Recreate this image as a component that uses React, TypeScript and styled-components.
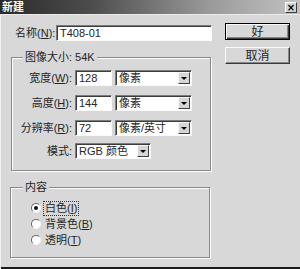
import { Fragment } from 'react';
import styled, { createGlobalStyle } from 'styled-components';

const GlobalStyle = createGlobalStyle`
  html, body {
    margin: 0;
    padding: 0;
    background: #d8d8d8;
  }
  body {
    font-family: "Liberation Sans", "Noto Sans CJK SC", sans-serif;
    font-size: 11px;
    color: #262626;
  }
`;

const Window = styled.div`
  width: 300px;
  height: 269px;
  box-sizing: border-box;
  display: flex;
  flex-direction: column;
  background: #d8d8d8;
  box-shadow: inset 1px 0 0 #f0f0f0, inset 0 -2px 0 #1a1a1a;
  overflow: hidden;
`;

const TitleBar = styled.div`
  flex: none;
  height: 14px;
  display: flex;
  align-items: center;
  justify-content: space-between;
  padding: 0 3px 0 2px;
  background: linear-gradient(to right, #2a2a2a 0%, #4c4c4c 30%, #9a9a9a 70%, #c2c2c2 100%);
  border-bottom: 1px solid #ececec;
`;

const Title = styled.span`
  color: #fff;
  font-weight: bold;
  font-size: 11px;
  line-height: 14px;
`;

const CloseButton = styled.span`
  width: 10px;
  height: 9px;
  display: flex;
  align-items: center;
  justify-content: center;
  background: #d4d4d4;
  border: 1px solid;
  border-color: #fff #3a3a3a #3a3a3a #fff;
  font: bold 10px "DejaVu Sans", sans-serif;
  line-height: 9px;
  color: #000;
`;

const Body = styled.div`
  flex: 1;
  display: flex;
  gap: 13px;
  padding: 8px 0 0 10px;
`;

const FormColumn = styled.div`
  width: 202px;
  display: flex;
  flex-direction: column;
`;

const NameRow = styled.div`
  display: flex;
  align-items: center;
  margin-top: 2px;
  height: 16px;
`;

const NameLabel = styled.span`
  width: 41px;
  padding-left: 5px;
  line-height: 14px;
  white-space: nowrap;
`;

const Field = styled.div<{ $width?: number }>`
  box-sizing: border-box;
  width: ${(p) => (p.$width ? `${p.$width}px` : '100%')};
  height: 16px;
  display: flex;
  align-items: center;
  padding-left: 3px;
  background: #fff;
  border: 1px solid;
  border-color: #7c7c7c #fafafa #fafafa #7c7c7c;
  box-shadow: inset 1px 1px 0 #3c3c3c;
  line-height: 14px;
  white-space: nowrap;
`;

const Group = styled.fieldset<{ $shift: number }>`
  box-sizing: border-box;
  width: 200px;
  margin: 9px 0 0 ${(p) => p.$shift}px;
  padding: 6px 0 9px 0;
  border: 1px solid #8a8a8a;
  box-shadow: inset 1px 1px 0 #fbfbfb, 1px 1px 0 #fbfbfb;
`;

const Legend = styled.legend<{ $offset: number }>`
  margin-left: ${(p) => p.$offset}px;
  padding: 0 2px;
  line-height: 14px;
  font-size: 11px;
  background: #d8d8d8;
`;

const SizeGrid = styled.div`
  display: grid;
  grid-template-columns: 56px 37px 77px;
  grid-auto-rows: 16px;
  column-gap: 3px;
  row-gap: 9px;
  align-items: center;
  margin-left: 4px;
`;

const RowLabel = styled.span<{ $lift?: boolean }>`
  text-align: right;
  line-height: 14px;
  white-space: nowrap;
  margin-top: ${(p) => (p.$lift ? '-4px' : '0')};
`;

const SelectBox = styled(Field)<{ $span?: boolean; $lift?: boolean }>`
  grid-column: ${(p) => (p.$span ? '2 / span 2' : 'auto')};
  justify-content: space-between;
  padding-right: 1px;
  margin-top: ${(p) => (p.$lift ? '-4px' : '0')};
`;

const SelectArrow = styled.span`
  box-sizing: border-box;
  width: 12px;
  height: 12px;
  display: flex;
  align-items: center;
  justify-content: center;
  background: #d6d6d6;
  border: 1px solid;
  border-color: #f6f6f6 #404040 #404040 #f6f6f6;

  &::after {
    content: '';
    border-left: 3px solid transparent;
    border-right: 3px solid transparent;
    border-top: 3px solid #000;
  }
`;

const RadioList = styled.div`
  display: flex;
  flex-direction: column;
  padding-left: 20px;
`;

const RadioRow = styled.div`
  height: 16px;
  display: flex;
  align-items: center;
  gap: 3px;
`;

const RadioCircle = styled.span<{ $checked?: boolean }>`
  box-sizing: border-box;
  width: 10px;
  height: 10px;
  border-radius: 50%;
  background: #fff;
  border: 1px solid;
  border-color: #6c6c6c #f4f4f4 #f4f4f4 #6c6c6c;
  display: flex;
  align-items: center;
  justify-content: center;

  &::after {
    content: '';
    width: 4px;
    height: 4px;
    border-radius: 50%;
    background: ${(p) => (p.$checked ? '#111' : 'transparent')};
  }
`;

const RadioLabel = styled.span<{ $focused?: boolean }>`
  padding: 0 1px;
  line-height: 13px;
  outline: ${(p) => (p.$focused ? '1px dotted #333' : 'none')};
  outline-offset: 0;
  white-space: nowrap;
`;

const ButtonColumn = styled.div`
  display: flex;
  flex-direction: column;
  gap: 7px;
`;

const Button = styled.div<{ $default?: boolean }>`
  box-sizing: border-box;
  width: 65px;
  height: 17px;
  display: flex;
  align-items: center;
  justify-content: center;
  background: #d8d8d8;
  line-height: 14px;
  font-size: 12px;
  border: 1px solid;
  border-color: ${(p) => (p.$default ? '#000' : '#fafafa #3a3a3a #3a3a3a #fafafa')};
  box-shadow: ${(p) =>
    p.$default
      ? 'inset 1px 1px 0 #fafafa, inset -1px -1px 0 #3a3a3a, inset -2px -2px 0 #888'
      : 'inset -1px -1px 0 #888'};
`;

const Key = styled.u`
  text-decoration: underline;
`;

const rows = [
  { label: '宽度', key: 'W', value: '128', unit: '像素' },
  { label: '高度', key: 'H', value: '144', unit: '像素' },
  { label: '分辨率', key: 'R', value: '72', unit: '像素/英寸' },
];

const radios = [
  { label: '白色', key: 'I', checked: true },
  { label: '背景色', key: 'B', checked: false },
  { label: '透明', key: 'T', checked: false },
];

const App = () => {
  return (
    <>
      <GlobalStyle />
      <Window>
        <TitleBar>
          <Title>新建</Title>
          <CloseButton>×</CloseButton>
        </TitleBar>
        <Body>
          <FormColumn>
            <NameRow>
              <NameLabel>
                名称(<Key>N</Key>):
              </NameLabel>
              <Field $width={156}>T408-01</Field>
            </NameRow>

            <Group $shift={1}>
              <Legend $offset={11}>图像大小: 54K</Legend>
              <SizeGrid>
                {rows.map((row) => (
                  <Fragment key={row.key}>
                    <RowLabel>
                      {row.label}(<Key>{row.key}</Key>):
                    </RowLabel>
                    <Field>{row.value}</Field>
                    <SelectBox>
                      {row.unit}
                      <SelectArrow />
                    </SelectBox>
                  </Fragment>
                ))}
                <RowLabel $lift>模式:</RowLabel>
                <SelectBox $span $lift $width={76}>
                  RGB 颜色
                  <SelectArrow />
                </SelectBox>
              </SizeGrid>
            </Group>

            <Group $shift={0}>
              <Legend $offset={12}>内容</Legend>
              <RadioList>
                {radios.map((r) => (
                  <RadioRow key={r.key}>
                    <RadioCircle $checked={r.checked} />
                    <RadioLabel $focused={r.checked}>
                      {r.label}(<Key>{r.key}</Key>)
                    </RadioLabel>
                  </RadioRow>
                ))}
              </RadioList>
            </Group>
          </FormColumn>

          <ButtonColumn>
            <Button $default>好</Button>
            <Button>取消</Button>
          </ButtonColumn>
        </Body>
      </Window>
    </>
  );
};

export default App;
